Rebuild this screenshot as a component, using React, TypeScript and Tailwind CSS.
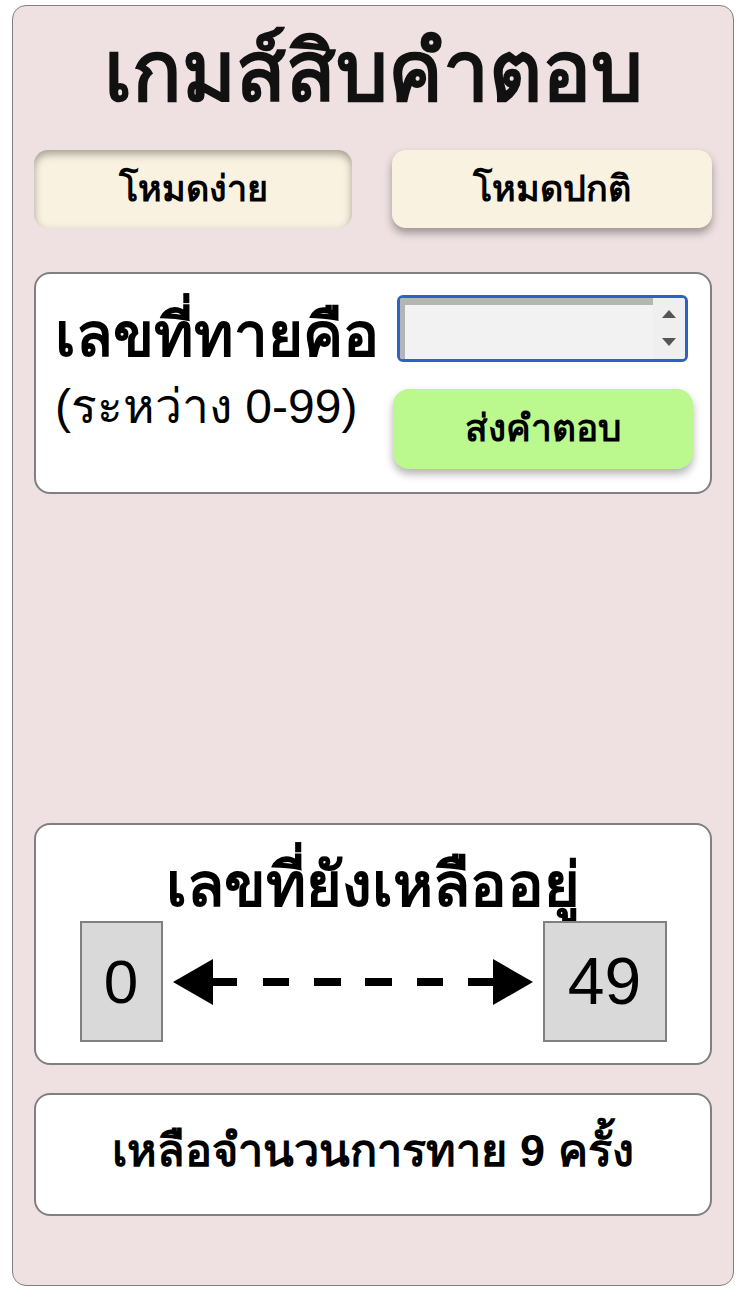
import React from 'react';

const FONT = "font-['Liberation_Sans','Noto_Sans',sans-serif]";

const App: React.FC = () => {
  return (
    <div className={`w-[740px] h-[1298px] bg-white pt-[5px] pl-[12px] ${FONT}`}>
      <div className="w-[722px] h-[1281px] bg-[#efe1e1] border border-[#808080] rounded-[14px] px-[21px] flex flex-col">
        {/* Title */}
        <h1 className="text-center text-[82px] font-bold leading-[80px] mt-[26px] text-[#111] blur-[0.6px]">
          เกมส์สิบคำตอบ
        </h1>

        {/* Mode buttons */}
        <div className="flex justify-between mt-[38px]">
          <button className="w-[318px] h-[78px] rounded-[14px] bg-[#faf2e1] text-[36px] font-bold shadow-[inset_0_4px_8px_rgba(0,0,0,0.35)]">
            โหมดง่าย
          </button>
          <button className="w-[320px] h-[78px] rounded-[14px] bg-[#faf2e1] text-[36px] font-bold shadow-[0_5px_8px_rgba(0,0,0,0.35)]">
            โหมดปกติ
          </button>
        </div>

        {/* Guess card */}
        <div className="mt-[44px] h-[222px] bg-white border-2 border-[#808080] rounded-[16px] flex justify-between pl-[19px] pr-[17px]">
          <div className="flex flex-col">
            <span className="text-[60px] font-bold leading-[60px] mt-[32px]">เลขที่ทายคือ</span>
            <span className="text-[48px] leading-[48px] mt-[17px]">(ระหว่าง 0-99)</span>
          </div>
          <div className="flex flex-col items-end">
            <div className="mt-[21px] mr-[5px] w-[291px] h-[67px] border-[3px] border-[#2f5fc8] rounded-[6px] overflow-hidden flex">
              <div className="flex-1 bg-[#f2f2f2] border-t-[7px] border-l-[5px] border-[#b5b5b5]" />
              <div className="w-[32px] bg-[#efefef] flex flex-col items-center pt-[12px] gap-[20px]">
                <svg width="14" height="8" viewBox="0 0 14 8"><path d="M7 0L14 8H0z" fill="#555" /></svg>
                <svg width="14" height="8" viewBox="0 0 14 8"><path d="M0 0H14L7 8z" fill="#555" /></svg>
              </div>
            </div>
            <button className="mt-[27px] w-[300px] h-[80px] rounded-[16px] bg-[#bbf98f] text-[37px] font-bold shadow-[0_5px_8px_rgba(0,0,0,0.3)]">
              ส่งคำตอบ
            </button>
          </div>
        </div>

        {/* Remaining numbers card */}
        <div className="mt-[329px] h-[242px] bg-white border-2 border-[#808080] rounded-[16px] flex flex-col items-center">
          <span className="text-[61px] font-bold leading-[60px] mt-[30px]">เลขที่ยังเหลืออยู่</span>
          <div className="w-full flex items-center justify-center mt-[6px]">
            <div className="w-[83px] h-[121px] bg-[#d9d9d9] border-2 border-[#808080] flex items-center justify-center text-[62px]">
              0
            </div>
            <svg width="360" height="60" viewBox="0 0 360 60" className="mx-[10px]">
              <path d="M0 30L40 7V53z" fill="#000" />
              <rect x="39" y="26" width="25" height="8" fill="#000" />
              <rect x="90" y="26" width="26" height="8" fill="#000" />
              <rect x="141" y="26" width="27" height="8" fill="#000" />
              <rect x="192" y="26" width="27" height="8" fill="#000" />
              <rect x="244" y="26" width="26" height="8" fill="#000" />
              <rect x="295" y="26" width="26" height="8" fill="#000" />
              <path d="M360 30L320 7V53z" fill="#000" />
            </svg>
            <div className="w-[124px] h-[121px] bg-[#d9d9d9] border-2 border-[#808080] flex items-center justify-center text-[66px]">
              49
            </div>
          </div>
        </div>

        {/* Guesses left */}
        <div className="mt-[28px] h-[123px] bg-white border-2 border-[#808080] rounded-[16px] flex items-center justify-center">
          <span className="text-[45px] font-bold leading-none mb-[8px]">เหลือจำนวนการทาย 9 ครั้ง</span>
        </div>
      </div>
    </div>
  );
};

export default App;
